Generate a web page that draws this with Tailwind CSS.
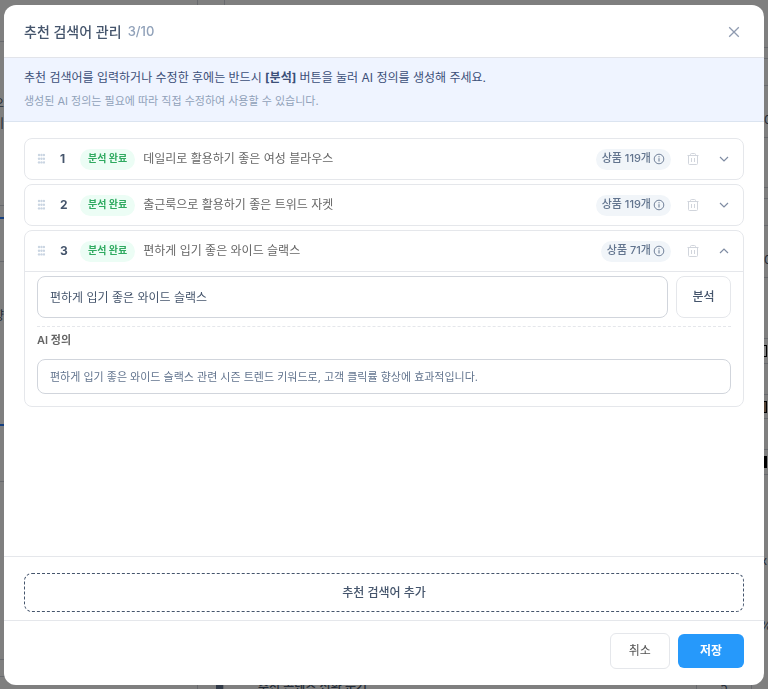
<!DOCTYPE html>
<html lang="ko">
<head>
    <meta charset="UTF-8">
    <meta name="viewport" content="width=device-width, initial-scale=1.0">
    <title>추천 검색어 관리</title>
    <script src="https://cdn.jsdelivr.net/npm/@tailwindcss/browser@4"></script>
</head>
<body class="overflow-hidden font-['Inter','Noto_Sans_CJK_KR',sans-serif]">
    <svg class="hidden">
        <symbol id="grip" viewBox="0 0 8 12">
            <g fill="currentColor">
                <circle cx="2" cy="2" r="1.2"/><circle cx="4.5" cy="2" r="1.2"/><circle cx="7" cy="2" r="1.2"/>
                <circle cx="2" cy="5.7" r="1.2"/><circle cx="4.5" cy="5.7" r="1.2"/><circle cx="7" cy="5.7" r="1.2"/>
                <circle cx="2" cy="9.4" r="1.2"/><circle cx="4.5" cy="9.4" r="1.2"/><circle cx="7" cy="9.4" r="1.2"/>
            </g>
        </symbol>
        <symbol id="info" viewBox="0 0 12 12">
            <circle cx="6" cy="6" r="4.8" fill="none" stroke="currentColor" stroke-width=".9"/>
            <path d="M6 5.2v3.3M6 3.2v1.1" fill="none" stroke="currentColor"/>
        </symbol>
        <symbol id="trash" viewBox="0 0 12 14">
            <path d="M.5 3.5h11M1.5 3.5v8a1 1 0 0 0 1 1h7a1 1 0 0 0 1-1v-8M3.5 3.5v-1a1 1 0 0 1 1-1h3a1 1 0 0 1 1 1v1M4.5 6v4M7.5 6v4" fill="none" stroke="currentColor"/>
        </symbol>
        <symbol id="chevron" viewBox="0 0 10 6">
            <path d="M1 1l4 4 4-4" fill="none" stroke="currentColor" stroke-width="1.2"/>
        </symbol>
    </svg>

    <!-- Page under the dialog -->
    <div class="flex h-screen overflow-hidden bg-white text-xs text-slate-600" aria-hidden="true">
        <div class="flex w-[198px] shrink-0 flex-col border-r border-gray-300">
            <div class="h-[42px] shrink-0 border-b border-gray-300"></div>
            <div class="h-[164px] shrink-0 border-b border-gray-300 pt-[52px] leading-5">
                <p class="flex w-1 justify-end overflow-hidden">으</p>
                <p class="flex w-1 justify-end overflow-hidden">이</p>
            </div>
            <div class="h-[13px] shrink-0 border-b-2 border-blue-500"></div>
            <div class="h-[43px] shrink-0 border-b border-gray-300"></div>
            <div class="h-[164px] shrink-0 border-b-2 border-blue-500 pt-[44px] leading-5"><p class="flex w-1 justify-end overflow-hidden">향</p></div>
            <div class="h-[56px] shrink-0 border-b border-gray-300"></div>
            <div class="h-[178px] shrink-0 border-b border-gray-300"></div>
            <div class="h-[17px] shrink-0 border-b border-gray-300"></div>
        </div>
        <div class="flex min-w-0 grow flex-col justify-between">
            <div class="ml-[26px] h-4 border-l border-gray-300"></div>
            <div class="flex h-4 items-start leading-7">
                <span class="mr-[34px] ml-[18px] h-4 w-2 border-r border-gray-300 bg-slate-500"></span>
                <span class="grow font-medium">추천 콘텐츠 전환 순기</span>
                <span class="flex h-4 w-14 justify-center border-x border-gray-300">5</span>
            </div>
        </div>
        <div class="flex w-4 shrink-0 flex-col items-end">
            <div class="h-12 w-4 shrink-0 border-b border-gray-300"></div>
            <div class="h-[11px] w-4 shrink-0 border-b border-gray-300"></div>
            <div class="h-[27px] w-4 shrink-0 border-b border-gray-300"></div>
            <div class="h-[52px] w-4 shrink-0 border-b border-gray-300 pt-6 pl-3 leading-5">0</div>
            <div class="h-[50px] w-4 shrink-0 border-b border-gray-300"></div>
            <div class="h-[11px] w-4 shrink-0 border-b border-gray-300"></div>
            <div class="h-[27px] w-4 shrink-0 border-b border-gray-300"></div>
            <div class="h-[52px] w-4 shrink-0 border-b border-gray-300 pt-6 pl-3 leading-5">0</div>
            <div class="h-[61px] w-4 shrink-0 border-b border-gray-300"></div>
            <div class="flex h-[25px] w-4 shrink-0 items-center border-b border-gray-300 pr-px"><i class="h-3 w-full border border-black bg-white"></i></div>
            <div class="h-[31px] w-4 shrink-0 border-b border-gray-300"></div>
            <div class="flex h-6 w-4 shrink-0 items-center border-b border-gray-300 pr-px"><i class="h-3 w-full border border-black bg-[#a98468]"></i></div>
            <div class="h-[31px] w-4 shrink-0 border-b border-gray-300"></div>
            <div class="flex h-[25px] w-4 shrink-0 items-center border-b border-gray-300 pr-px"><i class="h-3 w-full border border-black bg-black"></i></div>
            <div class="h-[141px] w-4 shrink-0 pt-[76px] pr-px text-right leading-5">x</div>
            <div class="w-4 shrink-0 overflow-hidden pl-2 leading-5">%</div>
        </div>
    </div>

    <div class="fixed inset-0 bg-black/50 px-1 pt-[5px] pb-1">
        <div role="dialog" aria-modal="true" aria-labelledby="title" class="flex h-full flex-col overflow-hidden rounded-xl bg-white">
            <!-- Header -->
            <header class="flex h-[53px] shrink-0 items-center justify-between border-b border-[#e2e4ea] px-5 pt-px">
                <h1 id="title" class="flex items-center gap-1.5 text-sm font-medium text-slate-600">추천 검색어 관리 <span class="text-[13px] text-slate-400">3/10</span></h1>
                <button aria-label="닫기" class="p-1 text-[#8f9bb0]">
                    <svg class="size-3" viewBox="0 0 12 12"><path d="M1.2 1.2l9.6 9.6M10.8 1.2L1.2 10.8" fill="none" stroke="currentColor" stroke-width="1.3"/></svg>
                </button>
            </header>

            <!-- Notice -->
            <div class="flex h-16 shrink-0 flex-col gap-[3px] border-b border-[#dbe4f0] bg-[#eff4ff] px-5 pt-2.5">
                <p class="text-xs leading-5 text-[#3b4f78]">추천 검색어를 입력하거나 수정한 후에는 반드시 <b class="font-bold">[분석]</b> 버튼을 눌러 AI 정의를 생성해 주세요.</p>
                <p class="text-[11px] leading-5 text-slate-400">생성된 AI 정의는 필요에 따라 직접 수정하여 사용할 수 있습니다.</p>
            </div>

            <!-- Keyword list -->
            <ul class="flex min-h-0 grow flex-col gap-1 overflow-y-auto px-5 pt-4">
                <li class="flex h-[42px] shrink-0 items-center rounded-lg border border-gray-200 px-3">
                    <svg class="mr-[15px] h-3 w-2 text-slate-300"><use href="#grip"/></svg>
                    <span class="w-5 text-xs font-bold text-slate-600">1</span>
                    <span class="mr-2 rounded-full bg-[#ecfdf5] px-2 pb-[3px] text-[10px] leading-[18px] font-bold text-[#2faa60]">분석 완료</span>
                    <span class="grow text-xs text-[#666]">데일리로 활용하기 좋은 여성 블라우스</span>
                    <span class="mr-4 flex items-center gap-0.5 rounded-full bg-slate-100 px-1.5 text-[11px] font-medium text-slate-500"><span class="pb-[3px] leading-[18px]">상품 119개</span> <svg class="size-3"><use href="#info"/></svg></span>
                    <button aria-label="삭제" class="mr-5 text-gray-300"><svg class="h-3.5 w-3"><use href="#trash"/></svg></button>
                    <button aria-label="펼치기" aria-expanded="false" class="mr-0.5 text-[#7f8ca3]"><svg class="h-1.5 w-2.5"><use href="#chevron"/></svg></button>
                </li>
                <li class="flex h-[42px] shrink-0 items-center rounded-lg border border-gray-200 px-3">
                    <svg class="mr-[15px] h-3 w-2 text-slate-300"><use href="#grip"/></svg>
                    <span class="w-5 text-xs font-bold text-slate-600">2</span>
                    <span class="mr-2 rounded-full bg-[#ecfdf5] px-2 pb-[3px] text-[10px] leading-[18px] font-bold text-[#2faa60]">분석 완료</span>
                    <span class="grow text-xs text-[#666]">출근룩으로 활용하기 좋은 트위드 자켓</span>
                    <span class="mr-4 flex items-center gap-0.5 rounded-full bg-slate-100 px-1.5 text-[11px] font-medium text-slate-500"><span class="pb-[3px] leading-[18px]">상품 119개</span> <svg class="size-3"><use href="#info"/></svg></span>
                    <button aria-label="삭제" class="mr-5 text-gray-300"><svg class="h-3.5 w-3"><use href="#trash"/></svg></button>
                    <button aria-label="펼치기" aria-expanded="false" class="mr-0.5 text-[#7f8ca3]"><svg class="h-1.5 w-2.5"><use href="#chevron"/></svg></button>
                </li>
                <li class="shrink-0 rounded-lg border border-gray-200">
                    <div class="flex h-[41px] items-center border-b border-gray-200 px-3">
                        <svg class="mr-[15px] h-3 w-2 text-slate-300"><use href="#grip"/></svg>
                        <span class="w-5 text-xs font-bold text-slate-600">3</span>
                        <span class="mr-2 rounded-full bg-[#ecfdf5] px-2 pb-[3px] text-[10px] leading-[18px] font-bold text-[#2faa60]">분석 완료</span>
                        <span class="grow text-xs text-[#666]">편하게 입기 좋은 와이드 슬랙스</span>
                        <span class="mr-4 flex items-center gap-0.5 rounded-full bg-slate-100 px-1.5 text-[11px] font-medium text-slate-500"><span class="pb-[3px] leading-[18px]">상품 71개</span> <svg class="size-3"><use href="#info"/></svg></span>
                        <button aria-label="삭제" class="mr-5 text-gray-300"><svg class="h-3.5 w-3"><use href="#trash"/></svg></button>
                        <button aria-label="접기" aria-expanded="true" class="mr-0.5 text-[#7f8ca3]"><svg class="h-1.5 w-2.5 rotate-180"><use href="#chevron"/></svg></button>
                    </div>
                    <div class="px-3 pt-1 pb-3">
                        <div class="flex gap-2 border-b border-dashed border-gray-200 pb-2">
                            <input type="text" aria-label="추천 검색어" value="편하게 입기 좋은 와이드 슬랙스" class="h-[42px] min-w-0 grow rounded-lg border border-gray-300 px-3 pb-0.5 text-xs text-slate-600">
                            <button class="h-[42px] w-[55px] rounded-lg border border-gray-200 text-xs font-medium text-slate-600">분석</button>
                        </div>
                        <label for="definition" class="mt-[3px] mb-[9px] block text-[11px] leading-5 font-semibold text-[#666]">AI 정의</label>
                        <input id="definition" type="text" value="편하게 입기 좋은 와이드 슬랙스 관련 시즌 트렌드 키워드로, 고객 클릭률 향상에 효과적입니다." class="h-[35px] w-full rounded-lg border border-gray-300 px-3 pb-0.5 text-[11px] text-slate-500">
                    </div>
                </li>
            </ul>

            <!-- Add keyword -->
            <div class="shrink-0 border-t border-gray-200 px-5 pt-4 pb-2">
                <button class="h-[39px] w-full rounded-lg border border-dashed border-slate-600 text-xs font-medium text-slate-600">추천 검색어 추가</button>
            </div>

            <!-- Footer -->
            <footer class="flex shrink-0 items-center justify-end gap-2 border-t border-gray-200 px-5 pt-3 pb-4">
                <button class="h-9 rounded-md border border-gray-200 px-[18px] text-xs text-[#555]">취소</button>
                <button class="h-[34px] rounded-md bg-[#2699fb] px-[22px] text-xs font-bold text-white">저장</button>
            </footer>
        </div>
    </div>
</body>
</html>
